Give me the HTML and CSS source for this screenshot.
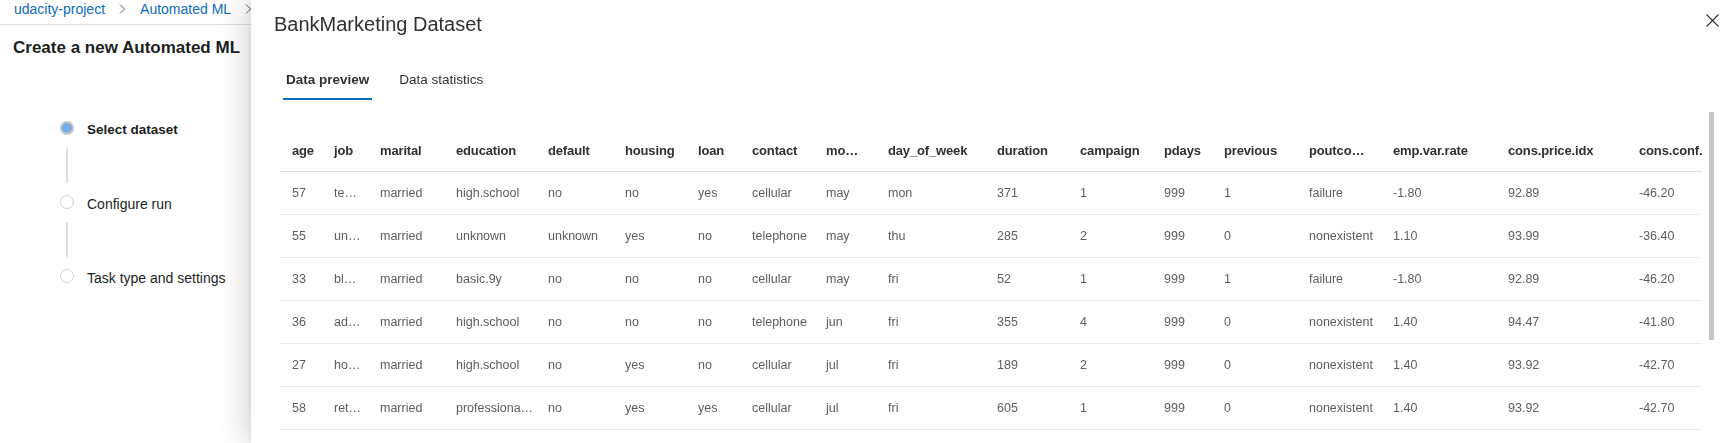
FILE: index.html
```html
<!DOCTYPE html>
<html lang="en">
<head>
<meta charset="utf-8">
<title>Create a new Automated ML run</title>
<link rel="stylesheet" href="styles.css">
</head>
<body>
<div class="page">
  <nav class="crumbs">
    <a class="crumb">udacity-project</a>
    <svg class="chev" width="7" height="10" viewBox="0 0 7 10"><polyline points="1,0.5 5.5,5 1,9.5" fill="none" stroke="#605e5c" stroke-width="1"/></svg>
    <a class="crumb">Automated ML</a>
    <svg class="chev" width="7" height="10" viewBox="0 0 7 10"><polyline points="1,0.5 5.5,5 1,9.5" fill="none" stroke="#605e5c" stroke-width="1"/></svg>
  </nav>
  <h1 class="page-title">Create a new Automated ML</h1>
  <ol class="steps">
    <li class="step active"><span class="dot"></span><span class="step-label">Select dataset</span></li>
    <li class="connector"></li>
    <li class="step"><span class="dot"></span><span class="step-label">Configure run</span></li>
    <li class="connector"></li>
    <li class="step"><span class="dot"></span><span class="step-label">Task type and settings</span></li>
  </ol>
</div>

<aside class="panel">
  <header class="panel-head">
    <h2 class="panel-title">BankMarketing Dataset</h2>
    <button class="close" aria-label="Close">
      <svg width="13" height="13" viewBox="0 0 13 13"><path d="M0.5 0.5 L12.5 12.5 M12.5 0.5 L0.5 12.5" stroke="#323130" stroke-width="1.1" fill="none"/></svg>
    </button>
  </header>
  <div class="tabs">
    <button class="tab active">Data preview</button>
    <button class="tab">Data statistics</button>
  </div>
  <div class="grid-area">
    <div class="viewport">
      <table class="data">
        <colgroup>
          <col class="w42"><col class="w46"><col class="w76"><col class="w92"><col class="w77"><col class="w73"><col class="w54"><col class="w74"><col class="w62"><col class="w109"><col class="w83"><col class="w84"><col class="w60"><col class="w85"><col class="w84"><col class="w115"><col class="w131"><col class="w122">
        </colgroup>
        <thead>
          <tr><th>age</th><th>job</th><th>marital</th><th>education</th><th>default</th><th>housing</th><th>loan</th><th>contact</th><th>mo…</th><th>day_of_week</th><th>duration</th><th>campaign</th><th>pdays</th><th>previous</th><th>poutco…</th><th>emp.var.rate</th><th>cons.price.idx</th><th>cons.conf.</th></tr>
        </thead>
        <tbody>
          <tr><td>57</td><td>te…</td><td>married</td><td>high.school</td><td>no</td><td>no</td><td>yes</td><td>cellular</td><td>may</td><td>mon</td><td>371</td><td>1</td><td>999</td><td>1</td><td>failure</td><td>-1.80</td><td>92.89</td><td>-46.20</td></tr>
          <tr><td>55</td><td>un…</td><td>married</td><td>unknown</td><td>unknown</td><td>yes</td><td>no</td><td>telephone</td><td>may</td><td>thu</td><td>285</td><td>2</td><td>999</td><td>0</td><td>nonexistent</td><td>1.10</td><td>93.99</td><td>-36.40</td></tr>
          <tr><td>33</td><td>bl…</td><td>married</td><td>basic.9y</td><td>no</td><td>no</td><td>no</td><td>cellular</td><td>may</td><td>fri</td><td>52</td><td>1</td><td>999</td><td>1</td><td>failure</td><td>-1.80</td><td>92.89</td><td>-46.20</td></tr>
          <tr><td>36</td><td>ad…</td><td>married</td><td>high.school</td><td>no</td><td>no</td><td>no</td><td>telephone</td><td>jun</td><td>fri</td><td>355</td><td>4</td><td>999</td><td>0</td><td>nonexistent</td><td>1.40</td><td>94.47</td><td>-41.80</td></tr>
          <tr><td>27</td><td>ho…</td><td>married</td><td>high.school</td><td>no</td><td>yes</td><td>no</td><td>cellular</td><td>jul</td><td>fri</td><td>189</td><td>2</td><td>999</td><td>0</td><td>nonexistent</td><td>1.40</td><td>93.92</td><td>-42.70</td></tr>
          <tr><td>58</td><td>ret…</td><td>married</td><td>professiona…</td><td>no</td><td>yes</td><td>yes</td><td>cellular</td><td>jul</td><td>fri</td><td>605</td><td>1</td><td>999</td><td>0</td><td>nonexistent</td><td>1.40</td><td>93.92</td><td>-42.70</td></tr>
        </tbody>
      </table>
    </div>
    <div class="scrollbar"><div class="thumb"></div></div>
  </div>
</aside>
</body>
</html>
```

FILE: styles.css
```css
html, body {
  margin: 0;
  padding: 0;
}
body {
  width: 1729px;
  height: 443px;
  overflow: hidden;
  background: #ffffff;
  font-family: "Liberation Sans", Arial, sans-serif;
  color: #201f1e;
}

/* ---------- background page ---------- */
.page {
  height: 443px;
}
.crumbs {
  display: flex;
  align-items: flex-start;
  gap: 14px;
  height: 24px;
  padding-left: 14px;
  border-bottom: 1px solid #e1dfdd;
  font-size: 14px;
  line-height: 18px;
}
.crumb {
  color: #0f6cbd;
  text-decoration: none;
}
.chev {
  margin-top: 4px;
  flex: none;
}
.page-title {
  margin: 12px 0 0;
  padding-left: 13px;
  font-size: 17px;
  line-height: 22px;
  font-weight: 700;
  color: #201f1e;
}
.steps {
  list-style: none;
  margin: 61px 0 0;
  padding: 0 0 0 60px;
}
.step {
  display: flex;
  align-items: center;
  gap: 13px;
  height: 20px;
  font-size: 14px;
  line-height: 20px;
  color: #201f1e;
}
.dot {
  flex: none;
  width: 14px;
  height: 14px;
  box-sizing: border-box;
  border-radius: 50%;
  border: 1.5px solid #d2d0ce;
  background: #ffffff;
  margin-bottom: 4px;
}
.step.active .dot {
  background: #71afe5;
  border: 2px solid #c8c6c4;
}
.step.active .step-label {
  font-weight: 700;
  font-size: 13.5px;
}
.connector {
  width: 2px;
  height: 35px;
  margin: 8px 0 11px 6px;
  background: #e1dfdd;
}

/* ---------- flyout panel ---------- */
.panel {
  position: fixed;
  top: 0;
  bottom: 0;
  left: 251px;
  right: 0;
  background: #ffffff;
  box-shadow: -6px 0 28px rgba(0, 0, 0, 0.16), -1px 0 5px rgba(0, 0, 0, 0.08);
  display: flex;
  flex-direction: column;
  color: #323130;
}
.panel-head {
  display: flex;
  justify-content: space-between;
  align-items: flex-start;
  padding: 0 10px 0 23px;
}
.panel-title {
  margin: 0;
  padding-top: 10px;
  font-size: 20px;
  line-height: 28px;
  font-weight: 400;
  color: #323130;
}
.close {
  margin-top: 14px;
  width: 13px;
  height: 13px;
  padding: 0;
  border: 0;
  background: none;
  display: block;
}
.close svg {
  display: block;
}
.tabs {
  display: flex;
  gap: 24px;
  margin-top: 24px;
  padding-left: 32px;
}
.tab {
  padding: 0 3px;
  border: 0;
  border-bottom: 2px solid transparent;
  background: none;
  font-family: inherit;
  font-size: 13.5px;
  line-height: 36px;
  color: #323130;
}
.tab.active {
  font-weight: 700;
  border-bottom-color: #0f6cbd;
}
.grid-area {
  flex: 1;
  min-height: 0;
  display: flex;
  margin-top: 12px;
  padding: 0 15px 0 29px;
}
.viewport {
  flex: 1;
  min-width: 0;
  overflow: hidden;
  padding-top: 18px;
}
.scrollbar {
  flex: none;
  width: 5px;
  margin-left: 7px;
}
.thumb {
  height: 228px;
  background: #c8c6c4;
}

/* ---------- table ---------- */
.data {
  table-layout: fixed;
  width: 1469px;
  border-collapse: separate;
  border-spacing: 0;
}
.data th,
.data td {
  text-align: left;
  white-space: nowrap;
  padding: 11px 12px;
  line-height: 20px;
}
.data th {
  padding-bottom: 10px;
  font-size: 13px;
  letter-spacing: -0.15px;
  font-weight: 700;
  color: #323130;
  border-bottom: 1px solid #e1dfdd;
}
.data td {
  font-size: 12.5px;
  color: #605e5c;
  border-bottom: 1px solid #edebe9;
}
.w42 { width: 42px; }
.w46 { width: 46px; }
.w54 { width: 54px; }
.w60 { width: 60px; }
.w62 { width: 62px; }
.w73 { width: 73px; }
.w74 { width: 74px; }
.w76 { width: 76px; }
.w77 { width: 77px; }
.w83 { width: 83px; }
.w84 { width: 84px; }
.w85 { width: 85px; }
.w92 { width: 92px; }
.w109 { width: 109px; }
.w115 { width: 115px; }
.w122 { width: 122px; }
.w131 { width: 131px; }
```
